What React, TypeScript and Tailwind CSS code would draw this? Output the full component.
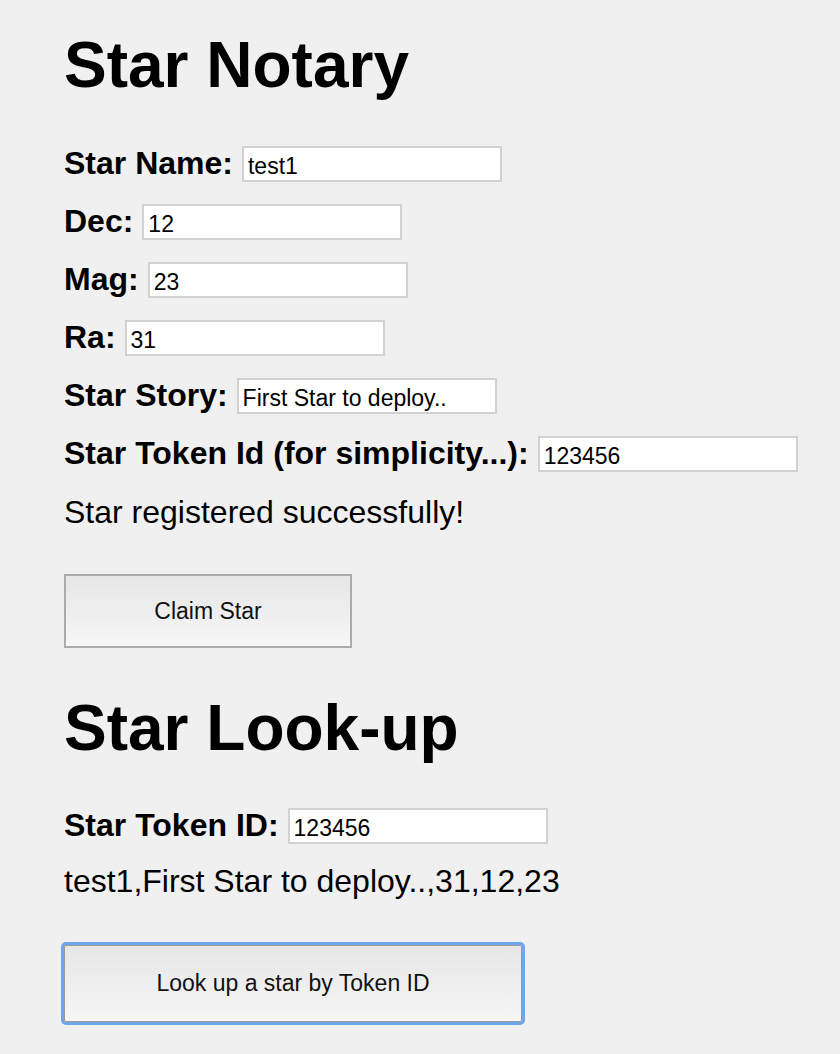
import React from "react";

const fields: { label: string; value: string }[] = [
  { label: "Star Name:", value: "test1" },
  { label: "Dec:", value: "12" },
  { label: "Mag:", value: "23" },
  { label: "Ra:", value: "31" },
  { label: "Star Story:", value: "First Star to deploy.." },
  { label: "Star Token Id (for simplicity...):", value: "123456" },
];

function Row({ label, value }: { label: string; value: string }) {
  return (
    <div className="flex items-baseline gap-[9px] h-[37px]">
      <label className="text-[32px] leading-none font-bold whitespace-nowrap">{label}</label>
      <input
        readOnly
        value={value}
        className="w-[260px] h-[36px] bg-white border-2 border-[#d2d2d2] px-[4px] pt-[4px] pb-0 text-[23px] text-black outline-none"
        style={{ fontFamily: '"Liberation Sans", Arial, sans-serif' }}
      />
    </div>
  );
}

export default function App() {
  return (
    <div
      className="min-h-[1054px] bg-[#f0f0f0] text-black pl-[64px] pt-[33px]"
      style={{ fontFamily: '"Liberation Sans", Arial, Helvetica, sans-serif' }}
    >
      <h1 className="text-[64px] leading-none font-bold">Star Notary</h1>
      <div className="mt-[49px] flex flex-col gap-[21px]">
        {fields.map((f) => (
          <Row key={f.label} label={f.label} value={f.value} />
        ))}
      </div>
      <p className="mt-[23px] text-[32px] leading-none">Star registered successfully!</p>
      <button className="mt-[46px] block w-[288px] h-[74px] border-2 border-[#ababab] bg-gradient-to-b from-[#e6e6e6] to-[#f6f6f6] text-[23px] text-[#111]">
        Claim Star
      </button>

      <h1 className="mt-[48px] text-[64px] leading-none font-bold">Star Look-up</h1>
      <div className="mt-[48px]">
        <Row label="Star Token ID:" value="123456" />
      </div>
      <p className="mt-[20px] text-[32px] leading-none">test1,First Star to deploy..,31,12,23</p>
      <button className="mt-[48px] block w-[458px] h-[77px] border border-[#9a9a9a] bg-gradient-to-b from-[#e6e6e6] to-[#f6f6f6] text-[23px] text-[#111] rounded-[2px] shadow-[0_0_0_3px_#6fa6ea]">
        Look up a star by Token ID
      </button>
    </div>
  );
}
